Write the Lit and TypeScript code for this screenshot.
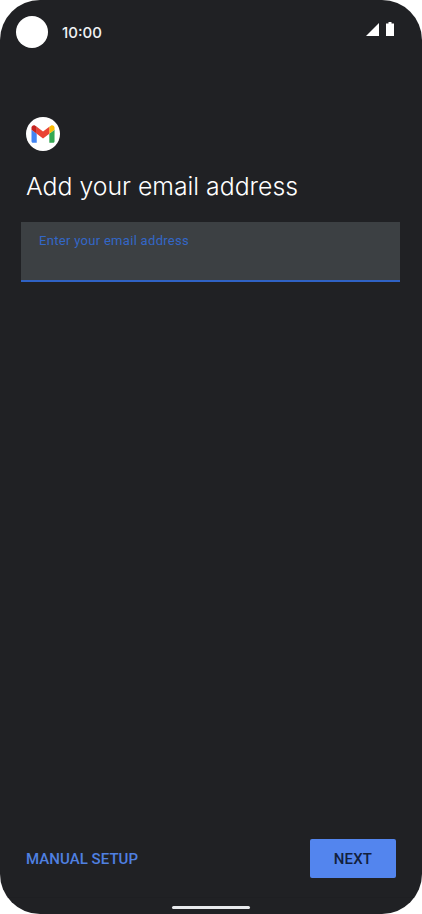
import { LitElement, html, css } from 'lit'
import { customElement } from 'lit/decorators.js'

@customElement('app-root')
export class AppRoot extends LitElement {
  static styles = css`
    :host {
      display: block;
      width: 422px;
      height: 914px;
      background: #fff;
      font-family: Roboto, "Liberation Sans", sans-serif;
    }

    .screen {
      box-sizing: border-box;
      display: flex;
      flex-direction: column;
      height: 914px;
      background: #202124;
      border-radius: 40px;
      overflow: hidden;
    }

    .status {
      display: flex;
      align-items: center;
      height: 32px;
      padding: 16px 28px 0 16px;
      flex: none;
    }

    .camera {
      width: 32px;
      height: 32px;
      border-radius: 50%;
      background: #fff;
    }

    .time {
      margin-left: 14px;
      color: #f1f3f4;
      font-family: Inter, Roboto, sans-serif;
      font-size: 15px;
      font-weight: 500;
    }

    .status-icons {
      margin-left: auto;
      display: flex;
      align-items: center;
      gap: 7px;
      margin-top: -6px;
    }

    .content {
      flex: 1;
      padding: 69px 22px 0 21px;
    }

    .logo {
      display: block;
      margin-left: 5px;
    }

    h1 {
      margin: 17px 0 0 5px;
      color: #fff;
      font-family: Inter, Roboto, sans-serif;
      font-size: 24.8px;
      line-height: 36px;
      font-weight: 300;
    }

    .field {
      box-sizing: border-box;
      height: 60px;
      margin-top: 18px;
      padding: 12px 18px 0;
      background: #3c4043;
      border-bottom: 2px solid #2f62c4;
      color: #3367c7;
      font-size: 13px;
      line-height: 14px;
      letter-spacing: 0.3px;
    }

    .actions {
      display: flex;
      align-items: center;
      justify-content: space-between;
      padding: 0 26px;
      flex: none;
    }

    .manual {
      color: #4f80e1;
      font-size: 15px;
      font-weight: 500;
      letter-spacing: 0.05px;
    }

    .next {
      display: flex;
      align-items: center;
      justify-content: center;
      width: 86px;
      height: 39px;
      background: #5385ee;
      border-radius: 2px;
      color: #12203d;
      font-size: 15px;
      font-weight: 500;
      letter-spacing: 0.15px;
    }

    .nav {
      display: flex;
      justify-content: center;
      height: 16px;
      margin-top: 19px;
      border-top: 1px solid #1e1f22;
      flex: none;
    }

    .home {
      width: 78px;
      height: 2.5px;
      margin-top: 8px;
      background: #e8eaed;
      border-radius: 2px;
    }
  `

  render() {
    return html`
      <div class="screen">
        <div class="status">
          <div class="camera"></div>
          <span class="time">10:00</span>
          <div class="status-icons">
            <svg width="13" height="13" viewBox="0 0 13 13"><path d="M13 0V13H0Z" fill="#fff"/></svg>
            <svg width="8" height="14" viewBox="0 0 8 14"><path d="M2.5 0h3v1.500H8V14H0V1.500h2.500Z" fill="#fff"/></svg>
          </div>
        </div>
        <div class="content">
          <svg class="logo" width="34" height="34" viewBox="0 0 34 34">
            <circle cx="17" cy="17" r="17" fill="#fff"/>
            <g transform="translate(5.5 8.200) scale(.96 .98)">
              <path d="M1.636 18h3.819V8.727L0 4.636V16.364C0 17.267.733 18 1.636 18z" fill="#4285f4"/>
              <path d="M18.545 18h3.819c.904 0 1.636-.733 1.636-1.636V4.636l-5.455 4.091z" fill="#34a853"/>
              <path d="M18.545 1.636V8.727L24 4.636V2.455C24 .433 21.691-.72 20.073.491z" fill="#fbbc04"/>
              <path d="M5.455 8.727V1.636L12 6.546l6.545-4.910v7.091L12 13.636z" fill="#ea4335"/>
              <path d="M0 2.455V4.636L5.455 8.727V1.636L3.927.491C2.309-.72 0 .433 0 2.455z" fill="#c5221f"/>
            </g>
          </svg>
          <h1>Add your email address</h1>
          <div class="field">Enter your email address</div>
        </div>
        <div class="actions">
          <span class="manual">MANUAL SETUP</span>
          <div class="next">NEXT</div>
        </div>
        <div class="nav"><div class="home"></div></div>
      </div>
    `
  }
}
